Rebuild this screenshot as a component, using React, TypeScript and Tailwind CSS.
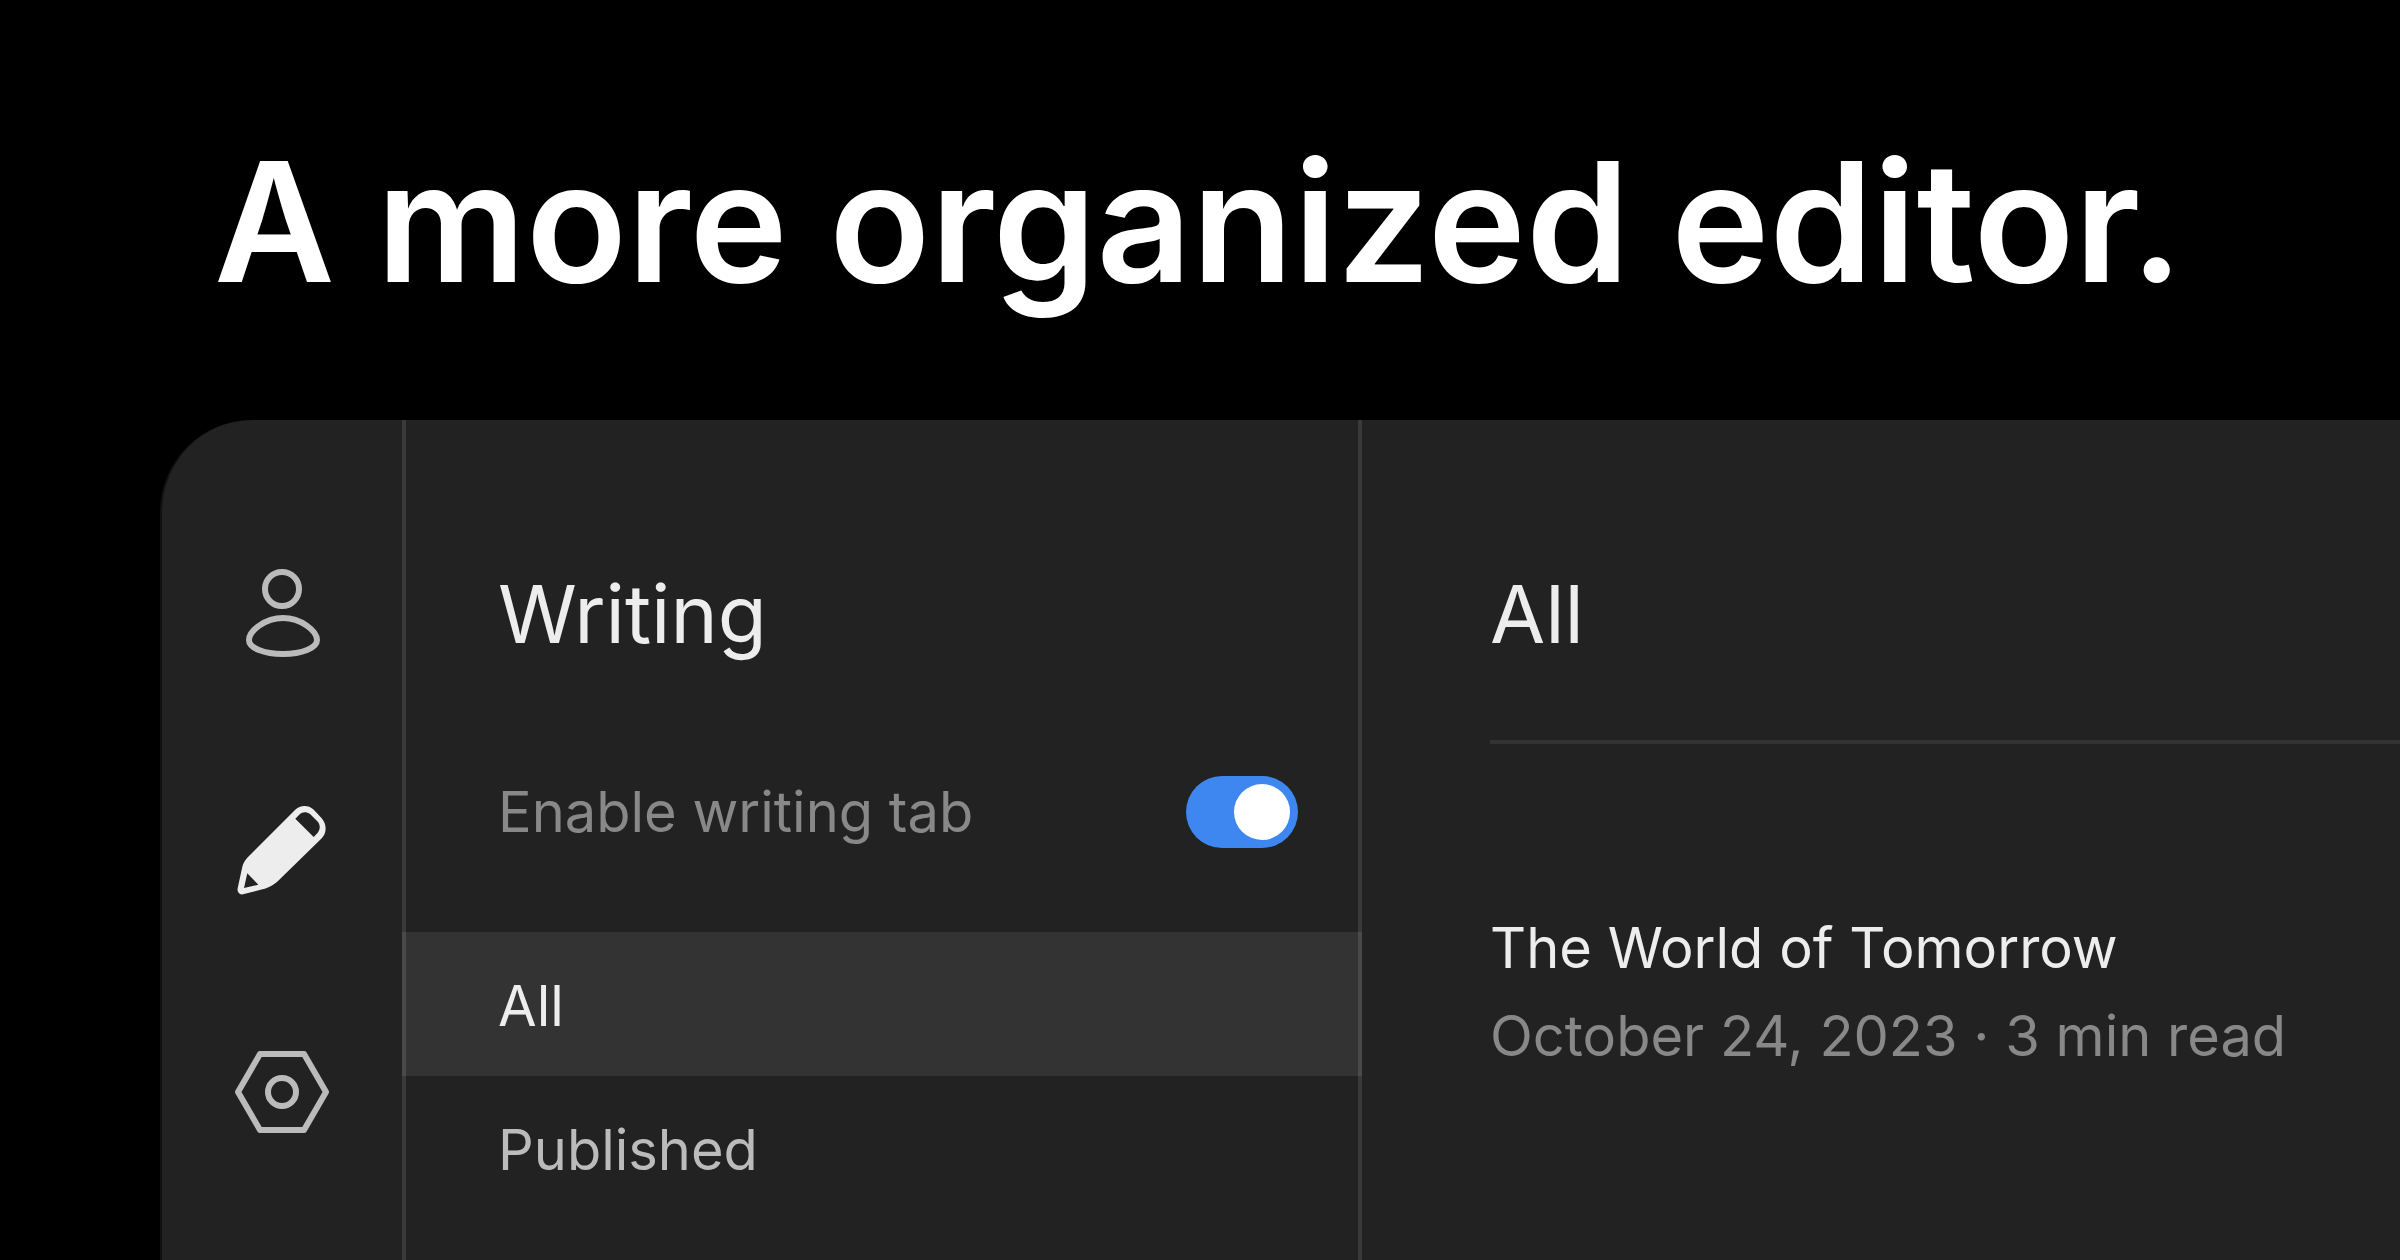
import { useState } from 'react';
import clsx from 'clsx';

type Tab = 'profile' | 'writing' | 'settings';

const FILTERS = ['All', 'Published'];

const POSTS = [
  { title: 'The World of Tomorrow', date: 'October 24, 2023', readTime: '3 min read' },
];

function PersonIcon() {
  return (
    <svg viewBox="0 0 96 96" className="size-24" fill="none" stroke="currentColor" strokeWidth="6">
      <circle cx="48" cy="25" r="17" />
      <path d="M49 54C67 54 83 67 83 76C83 84 68 90 49 90C30 90 15 84 15 76C15 67 31 54 49 54Z" />
    </svg>
  );
}

function PencilIcon() {
  return (
    <svg viewBox="0 0 96 96" className="size-24" fill="currentColor" fillRule="evenodd">
      <path d="M16 51L61 6C66 1 74 0.5 79.5 5.5L87.5 14C93 20 93 29 87.5 34.5L45 76C39.5 81.5 34 84 27.5 85.5L9 90.3C6 91 3 88 3.6 84.5L8.5 62C9.5 58 12 55 16 51ZM61.3 14.7L79.7 33L83.5 29C86.5 25 86.5 20.5 83.3 17.3L76 10C72.5 7.5 68.5 7.5 65.5 10.5ZM13.3 69.3L10 84L24.3 80.7Z" />
    </svg>
  );
}

function SettingsIcon() {
  return (
    <svg viewBox="0 0 96 96" className="size-24" fill="none" stroke="currentColor" strokeWidth="6" strokeLinejoin="round">
      <path d="M26 10H70L92 48L70 86H26L4 48Z" />
      <circle cx="48" cy="48" r="14" />
    </svg>
  );
}

const TABS: { id: Tab; label: string; icon: () => React.ReactNode }[] = [
  { id: 'profile', label: 'Profile', icon: PersonIcon },
  { id: 'writing', label: 'Writing', icon: PencilIcon },
  { id: 'settings', label: 'Settings', icon: SettingsIcon },
];

export default function App() {
  const [tab, setTab] = useState<Tab>('writing');
  const [filter, setFilter] = useState('All');
  const [enabled, setEnabled] = useState(true);

  return (
    <div className="flex min-h-screen flex-col overflow-hidden bg-black font-['Inter',sans-serif] text-[56px] text-[#ededed]">
      <header className="px-[214px] pt-[122px] pb-[98px]">
        <h1 className="text-[166px] leading-[200px] font-semibold whitespace-nowrap text-white">
          A more organized editor.
        </h1>
      </header>

      <div className="ml-40 flex flex-1 rounded-tl-[92px] border-l-2 border-[#111111] bg-[#222222]">
        {/* Icon rail */}
        <nav className="flex w-61 shrink-0 flex-col items-center gap-36 border-r-4 border-[#3a3a3a] pt-36">
          {TABS.map(({ id, label, icon: Icon }) => (
            <button
              key={id}
              type="button"
              aria-label={label}
              onClick={() => setTab(id)}
              className={tab === id ? 'text-[#ededed]' : 'text-[#bbbbbb]'}
            >
              <Icon />
            </button>
          ))}
        </nav>

        {/* Filters */}
        <section className="w-239 shrink-0 border-r-4 border-[#3a3a3a] pt-[146px]">
          <h2 className="pl-23 text-[80px] leading-24">Writing</h2>

          <div className="mt-[114px] mb-21 flex items-center justify-between pr-15 pl-23">
            <label htmlFor="writing-tab" className="leading-18 text-[#888888]">
              Enable writing tab
            </label>
            <input
              id="writing-tab"
              type="checkbox"
              role="switch"
              checked={enabled}
              onChange={e => setEnabled(e.target.checked)}
              className="flex h-18 w-28 appearance-none items-center rounded-full bg-[#555555] px-2 before:size-14 before:rounded-full before:bg-white checked:justify-end checked:bg-[#3e87f0]"
            />
          </div>

          <ul>
            {FILTERS.map(name => (
              <li key={name}>
                <button
                  type="button"
                  onClick={() => setFilter(name)}
                  className={clsx(
                    '-mx-1 block h-36 w-[960px] pt-1 pl-24 text-left',
                    filter === name ? 'bg-white/8' : 'text-[#bbbbbb]'
                  )}
                >
                  {name}
                </button>
              </li>
            ))}
          </ul>
        </section>

        {/* Posts */}
        <main className="flex-1 pt-[146px] pl-32">
          <h2 className="border-b-4 border-[#333333] pb-[78px] text-[80px] leading-24">{filter}</h2>
          {POSTS.map(post => (
            <article key={post.title} className="mt-40 leading-22">
              <h3>
                <a href="#post">{post.title}</a>
              </h3>
              <p className="text-[#888888]">
                {post.date} · {post.readTime}
              </p>
            </article>
          ))}
        </main>
      </div>
    </div>
  );
}
